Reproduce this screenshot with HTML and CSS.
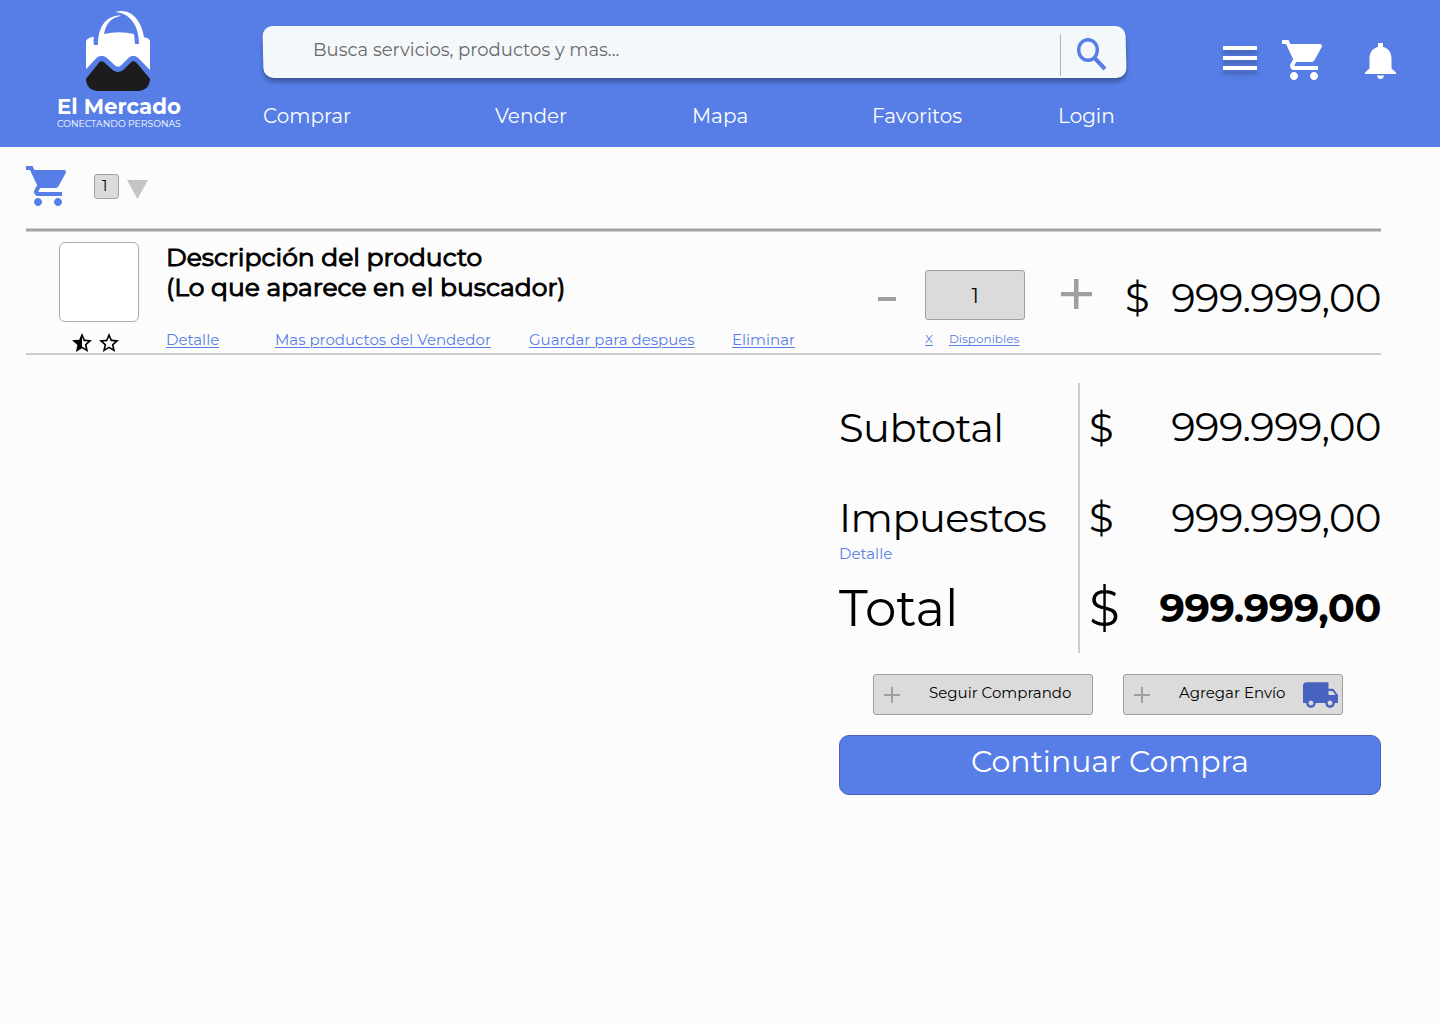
FILE: index.html
```html
<!DOCTYPE html>
<html lang="es">
<head>
<meta charset="utf-8">
<title>El Mercado</title>
<link rel="stylesheet" href="styles.css">
</head>
<body>
<svg class="defs" width="0" height="0">
  <symbol id="cart" viewBox="1 2 20 20"><path d="M7 18c-1.1 0-1.99.9-1.99 2S5.9 22 7 22s2-.9 2-2-.9-2-2-2zM1 2v2h2l3.600 7.590-1.350 2.450c-.16.28-.25.61-.25.960 0 1.100.9 2 2 2h12v-2H7.420c-.14 0-.25-.11-.25-.25l.03-.12.9-1.630h7.450c.75 0 1.410-.41 1.750-1.030l3.580-6.490c.08-.14.12-.31.12-.48 0-.55-.45-1-1-1H5.210l-.94-2H1zm16 16c-1.100 0-1.990.9-1.990 2s.89 2 1.990 2 2-.9 2-2-.9-2-2-2z"/></symbol>
</svg>
<header class="header">
  <a class="brand">
    <svg class="brand-mark" viewBox="138 33 192 240">
      <path fill="#fff" d="M138 208V124Q139 114 162 110Q159 122 162 135H174C174 88 192 46 244 46Q236 50 229 52C208 58 196 80 192 102Q236 92 282 102L285 132H297C297 80 273 40 226 36C275 22 305 65 312 112Q328 114 330 124V210L294 173Q280 162 266 173L242 197Q234 202 226 197L200 173Q185 162 170 173Z"/>
      <path fill="#1c1c1c" d="M138 236L178 187Q185 180 192 187L218 210Q234 222 250 210L273 187Q280 180 288 187L330 236V240Q328 269 296 273H172Q140 269 138 240Z"/>
    </svg>
    <strong class="brand-name">El Mercado</strong>
    <small class="brand-tag">CONECTANDO PERSONAS</small>
  </a>
  <div class="center">
    <div class="search">
      <span class="search-text">Busca servicios, productos y mas...</span>
      <span class="search-btn"><svg width="31" height="33" viewBox="0 0 31 33" fill="none" stroke="#567ee6"><ellipse cx="11" cy="12" rx="9.300" ry="10.300" stroke-width="3.400"/><path d="M18 20.500L28 31" stroke-width="4"/></svg></span>
    </div>
    <nav class="nav"><a>Comprar</a><a>Vender</a><a>Mapa</a><a>Favoritos</a><a>Login</a></nav>
  </div>
  <div class="tools">
    <span class="burger"><i></i><i></i><i></i></span>
    <svg class="cart-top" width="40" height="40"><use href="#cart"/></svg>
    <svg class="bell" width="31" height="36" viewBox="0 0 31 36"><path d="M13 0h5v4c5.500 1 8.500 5.500 8.500 12v9.500l4.500 4V31H0v-1.500l4.500-4V16C4.500 9.500 7.500 5 13 4zM12 32.500h7q-.5 3.500-3.500 3.500t-3.500-3.500z"/></svg>
  </div>
</header>
<main class="main">
  <div class="cart-bar">
    <svg width="40" height="40"><use href="#cart"/></svg>
    <span class="count">1</span>
    <svg class="caret" width="21" height="19" viewBox="0 0 21 19"><path d="M0 0h21L10.500 19z"/></svg>
  </div>
  <article class="item">
    <div class="thumb-col">
      <div class="thumb"></div>
      <div class="stars">
        <svg width="20" height="19" viewBox="2 2 20 19"><path d="M22 9.240l-7.190-.62L12 2 9.190 8.630 2 9.240l5.460 4.730L5.820 21 12 17.270 18.180 21l-1.630-7.030L22 9.240zM12 15.400V6.100l1.710 4.040 4.380.38-3.320 2.880 1 4.280L12 15.400z"/></svg>
        <svg width="20" height="19" viewBox="2 2 20 19"><path d="M22 9.240l-7.190-.62L12 2 9.190 8.630 2 9.240l5.460 4.730L5.820 21 12 17.270 18.180 21l-1.630-7.030L22 9.240zM12 15.400l-3.760 2.270 1-4.280-3.320-2.880 4.380-.38L12 6.100l1.710 4.040 4.380.38-3.320 2.880 1 4.280L12 15.400z"/></svg>
      </div>
    </div>
    <div class="info">
      <h1 class="title">Descripción del producto<br>(Lo que aparece en el buscador)</h1>
      <div class="links"><a>Detalle</a><a>Mas productos del Vendedor</a><a>Guardar para despues</a><a>Eliminar</a></div>
    </div>
    <svg class="minus" width="18" height="4" viewBox="0 0 18 4"><path d="M0 0h18v4H0z"/></svg>
    <div class="qty">
      <div class="qty-box">1</div>
      <div class="stock"><a>X</a><a>Disponibles</a></div>
    </div>
    <svg class="plus" width="31" height="30" viewBox="0 0 31 30"><path d="M13 0h4.500v13H31v4.200H17.500V30H13V17.200H0V13h13z"/></svg>
    <div class="price"><span>$</span><span class="amount">999.999,00</span></div>
  </article>
  <section class="summary">
    <div class="totals">
      <div class="labels">
        <div class="row subtotal">Subtotal</div>
        <div class="row tax">Impuestos</div>
        <div class="row detail"><a>Detalle</a></div>
        <div class="row total">Total</div>
      </div>
      <div class="values">
        <div class="row subtotal"><span>$</span><span class="amount">999.999,00</span></div>
        <div class="row tax"><span>$</span><span class="amount">999.999,00</span></div>
        <div class="row detail"></div>
        <div class="row total"><span>$</span><strong class="amount">999.999,00</strong></div>
      </div>
    </div>
    <div class="actions">
      <button class="btn"><svg width="16" height="16" viewBox="0 0 16 16"><path d="M7 0h2v7h7v2H9v7H7V9H0V7h7z"/></svg><span>Seguir Comprando</span></button>
      <button class="btn"><svg width="16" height="16" viewBox="0 0 16 16"><path d="M7 0h2v7h7v2H9v7H7V9H0V7h7z"/></svg><span>Agregar Envío</span><svg class="truck" width="35" height="26" viewBox="1 4 22 16"><path d="M20 8h-3V4H3c-1.100 0-2 .9-2 2v11h2c0 1.660 1.340 3 3 3s3-1.340 3-3h6c0 1.660 1.340 3 3 3s3-1.340 3-3h2v-5l-3-4zM6 18.500c-.83 0-1.500-.67-1.500-1.500s.67-1.500 1.500-1.500 1.500.67 1.500 1.500-.67 1.500-1.500 1.500zm13.500-9l1.960 2.500H17V9.500h2.500zm-1.500 9c-.83 0-1.500-.67-1.500-1.500s.67-1.500 1.500-1.500 1.500.67 1.500 1.500-.67 1.500-1.500 1.500z"/></svg></button>
    </div>
    <button class="continue">Continuar Compra</button>
  </section>
</main>
</body>
</html>
```
FILE: styles.css
```css
* { box-sizing: border-box; }
body { margin: 0; width: 1440px; height: 1024px; background: #fcfcfc; color: #000; font-family: Montserrat, Inter, sans-serif; font-weight: 400; overflow: hidden; }
svg { display: block; flex: none; }
.defs { display: none; }
span, a { white-space: nowrap; }
button { font: inherit; margin: 0; padding: 0; }

.header { display: flex; height: 147px; background: #567ee6; color: #fff; }
.brand { width: 124px; margin: 11px 82px 0 57px; }
.brand-mark { width: 64px; height: 80px; margin-left: 29px; }
.brand-name { display: block; margin-top: 3px; font-size: 21.300px; line-height: 24px; font-weight: 700; }
.brand-tag { display: block; font-size: 9.250px; line-height: 12px; }
.center { width: 863px; padding-top: 26px; }
.search { position: relative; z-index: 0; display: flex; justify-content: space-between; height: 52px; padding-left: 50px; }
.search::before { content: ""; position: absolute; inset: 0; z-index: -1; border-radius: 10px; background: #f4f8fb; transform: skewX(1.300deg); box-shadow: 0 4px 4px rgba(0, 0, 0, .3); }
.search-text { font-size: 18px; line-height: 22px; margin-top: 13px; color: #6a6a6a; }
.search-btn { width: 66px; height: 42px; margin-top: 8px; padding: 4px 0 0 16px; border-left: 1px solid #b0b4b8; }
.nav { display: grid; grid-template-columns: 232px 197px 180px 186px auto; margin-top: 26px; font-size: 20px; line-height: 24px; }
.tools { display: flex; align-items: flex-start; fill: #fff; }
.burger { display: grid; gap: 6px; width: 34px; margin: 46px 25.500px 0 96.500px; }
.burger i { height: 4px; background: #fff; box-shadow: 0 4px 4px rgba(0, 0, 0, .25); }
.cart-top { margin-top: 40px; }
.bell { margin: 43px 0 0 43px; }

.main { padding: 19px 59px 0 26px; }
.cart-bar { display: flex; height: 62px; fill: #567ee6; }
.count { width: 25px; height: 25px; margin: 8px 8px 0 28px; border: 1px solid #a3a3a3; border-radius: 3px; background: #dbdbdb; font-size: 15px; line-height: 22px; padding-left: 7px; }
.caret { fill: #c4c4c4; margin-top: 14px; }
.item { display: flex; height: 127px; border-bottom: 2px solid #ccc; padding-left: 33px; background: linear-gradient(#d0d0d0 1px, #a3a3a3 1px 3px, #d0d0d0 3px 4px, transparent 4px); }
.thumb-col { width: 80px; padding-top: 14px; }
.thumb { height: 80px; border: 1px solid #ababab; border-radius: 6px; background: #fff; }
.stars { display: flex; gap: 7px; margin: 11px 0 0 13px; }
.info { width: 711px; margin-left: 27px; padding-top: 14px; }
.title { margin: 0; font-size: 25px; line-height: 30px; font-weight: 400; -webkit-text-stroke: 1px #000; }
.links { display: grid; grid-template-columns: 109px 254px 203px auto; margin-top: 29px; font-size: 15px; line-height: 18px; }
.links a, .stock a { color: #567ee6; text-decoration: underline; text-decoration-thickness: 1px; text-underline-offset: 2px; justify-self: start; }
.minus { margin: 69px 29px 0 1px; fill: #9f9f9f; }
.qty { width: 100px; padding-top: 42px; }
.qty-box { height: 50px; border: 1px solid #a0a0a0; border-radius: 3px; background: #dbdbdb; text-align: center; font-size: 20px; line-height: 51px; }
.stock { display: flex; gap: 16px; margin-top: 11px; font-size: 12px; line-height: 16px; }
.plus { margin: 51px 33px 0 36px; fill: #9f9f9f; }
.price { display: flex; justify-content: space-between; flex: 1; padding-top: 46px; font-size: 40px; line-height: 48px; }
.amount { letter-spacing: -.5px; }

.summary { width: 542px; margin: 28px 0 0 auto; }
.totals { display: grid; grid-template-columns: 241px 301px; height: 270px; }
.labels { border-right: 2px solid #ccc; }
.labels .subtotal, .labels .tax { letter-spacing: -.55px; }
.values { padding-left: 9px; }
.values .row { display: flex; justify-content: space-between; }
.subtotal { height: 90px; padding-top: 21px; font-size: 40px; line-height: 48px; }
.subtotal .amount { margin-top: -1px; }
.tax { height: 70px; padding-top: 21px; font-size: 40px; line-height: 48px; }
.detail { height: 26px; font-size: 15px; line-height: 22px; color: #567ee6; }
.total { font-size: 50px; line-height: 80px; }
.total strong { font-size: 40px; font-weight: 700; line-height: 78px; }
.actions { display: flex; gap: 30px; margin: 21px 0 20px 34px; }
.btn { display: flex; width: 220px; height: 41px; padding: 12px 0 0 10px; border: 1px solid #a0a0a0; border-radius: 3px; background: #dbdbdb; fill: #9f9f9f; font-size: 15px; line-height: 18px; color: #000; }
.btn span { margin: -3px 0 0 29px; }
.truck { margin: -5.500px 0 0 17px; fill: #4863bf; }
.continue { display: block; width: 542px; height: 60px; border: 1px solid #4863bf; border-radius: 10px; background: #567ee6; color: #fff; font-size: 30px; line-height: 36px; padding-bottom: 6px; }
```
